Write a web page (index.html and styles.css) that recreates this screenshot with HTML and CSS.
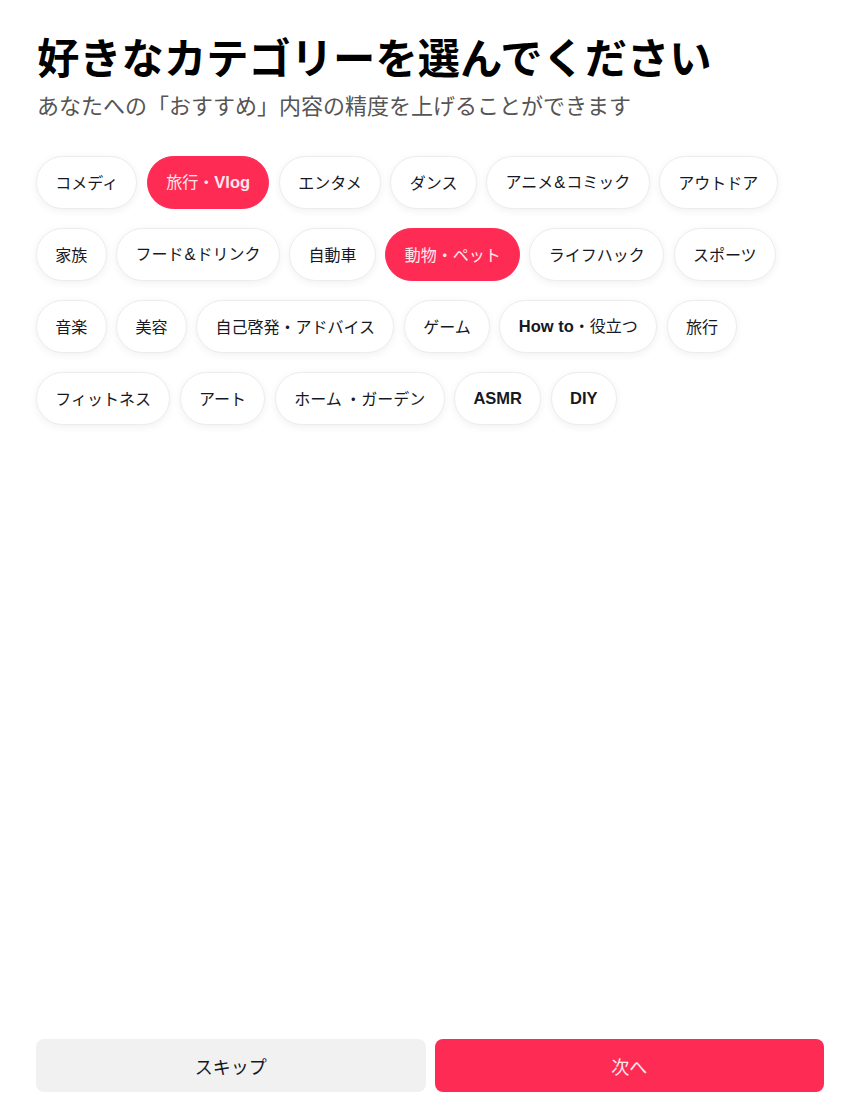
FILE: index.html
```html
<!DOCTYPE html>
<html lang="ja">
<head>
<meta charset="utf-8">
<title>カテゴリー選択</title>
<link rel="stylesheet" href="styles.css">
</head>
<body>
<div class="page">
  <header class="head">
    <h1 class="title">好きなカテゴリーを選んでください</h1>
    <p class="subtitle">あなたへの「おすすめ」内容の精度を上げることができます</p>
  </header>
  <div class="chips">
    <span class="chip"><span class="label">コメディ</span></span>
    <span class="chip chip-on"><span class="label">旅行・<b class="lat">Vlog</b></span></span>
    <span class="chip"><span class="label">エンタメ</span></span>
    <span class="chip"><span class="label">ダンス</span></span>
    <span class="chip"><span class="label">アニメ<span class="amp">&amp;</span>コミック</span></span>
    <span class="chip"><span class="label">アウトドア</span></span>
    <span class="chip"><span class="label">家族</span></span>
    <span class="chip"><span class="label">フード<span class="amp">&amp;</span>ドリンク</span></span>
    <span class="chip"><span class="label">自動車</span></span>
    <span class="chip chip-on"><span class="label">動物・ペット</span></span>
    <span class="chip"><span class="label">ライフハック</span></span>
    <span class="chip"><span class="label">スポーツ</span></span>
    <span class="chip"><span class="label">音楽</span></span>
    <span class="chip"><span class="label">美容</span></span>
    <span class="chip"><span class="label">自己啓発・アドバイス</span></span>
    <span class="chip"><span class="label">ゲーム</span></span>
    <span class="chip"><span class="label"><b class="lat">How to</b>・役立つ</span></span>
    <span class="chip"><span class="label">旅行</span></span>
    <span class="chip"><span class="label">フィットネス</span></span>
    <span class="chip"><span class="label">アート</span></span>
    <span class="chip"><span class="label">ホーム ・ガーデン</span></span>
    <span class="chip"><span class="label"><b class="lat">ASMR</b></span></span>
    <span class="chip"><span class="label"><b class="lat">DIY</b></span></span>
  </div>
  <footer class="actions">
    <button class="btn btn-skip">スキップ</button>
    <button class="btn btn-next">次へ</button>
  </footer>
</div>
</body>
</html>
```

FILE: styles.css
```css
* { box-sizing: border-box; }
html, body {
  margin: 0;
  padding: 0;
  background: #ffffff;
}
body {
  font-family: "Noto Sans CJK JP", "Noto Sans", sans-serif;
  color: #161823;
}
.page {
  min-height: 100vh;
  display: flex;
  flex-direction: column;
  padding: 28px 36px 19px 36px;
}
.head {
  padding-left: 1px;
}
.title {
  margin: 0;
  font-size: 42.3px;
  line-height: 56px;
  font-weight: 700;
  color: #000;
}
.subtitle {
  margin: 4px 0 0 0;
  font-size: 22px;
  line-height: 32px;
  color: #555;
  font-weight: 400;
}
.chips {
  display: flex;
  flex-wrap: wrap;
  gap: 19px 9.5px;
  margin-top: 36px;
}
.chip {
  display: inline-flex;
  align-items: center;
  height: 53px;
  padding: 0 18.3px;
  border-radius: 27px;
  background: #fff;
  border: 1px solid #ececec;
  box-shadow: 0 2px 8px rgba(0, 0, 0, 0.06);
  font-size: 16px;
  color: #161823;
  white-space: nowrap;
}
.label {
  display: block;
  line-height: 24px;
  padding-bottom: 2px;
}
.chip-on {
  background: #fe2c55;
  border-color: #fe2c55;
  color: #ffe8ec;
  box-shadow: none;
}
.lat {
  font-family: "Liberation Sans", Arial, sans-serif;
  font-weight: 700;
  font-size: 16.5px;
}
.amp {
  font-family: "Liberation Sans", Arial, sans-serif;
  font-weight: 400;
  font-size: 16.5px;
  margin: 0 1px;
}
.actions {
  margin-top: auto;
  display: flex;
  gap: 9px;
}
.btn {
  flex: 1;
  height: 53px;
  border: none;
  border-radius: 8px;
  font-family: "Noto Sans CJK JP", "Noto Sans", sans-serif;
  font-size: 18px;
  cursor: pointer;
}
.btn-skip {
  background: #f1f1f2;
  color: #161823;
}
.btn-next {
  background: #fe2c55;
  color: #ffe8ec;
}
```
